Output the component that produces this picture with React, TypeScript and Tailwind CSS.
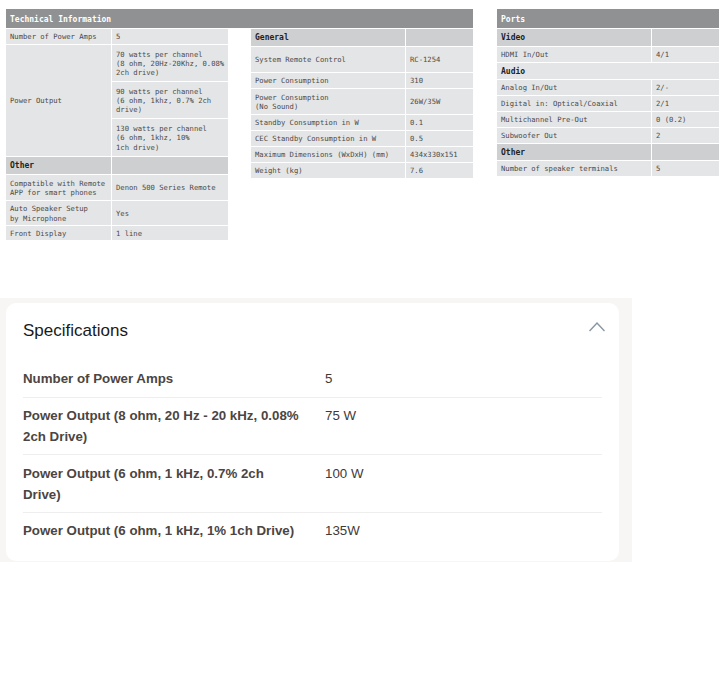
import React from 'react';

type Row = { label: React.ReactNode; value?: React.ReactNode; h: number; kind?: 'head' | 'light' };

const Cell: React.FC<{ className?: string; children?: React.ReactNode }> = ({ className = '', children }) => (
  <div className={`flex items-center pt-px ${className}`}>{children}</div>
);

const SpecTable: React.FC<{ rows: Row[]; labelW: string; valueW: string }> = ({ rows, labelW, valueW }) => (
  <div className="flex flex-col gap-px">
    {rows.map((r, i) => {
      const bg = r.kind === 'head' ? 'bg-[#cdcfd1]' : 'bg-[#e4e5e6]';
      if (r.kind === 'light') {
        return (
          <div key={i} style={{ height: r.h }} className="flex items-center pt-px bg-[#e4e5e6] pl-1 font-bold text-[#222] text-[8px]">
            {r.label}
          </div>
        );
      }
      return (
        <div key={i} style={{ height: r.h }} className="flex gap-px">
          <Cell className={`${labelW} ${bg} pl-1 ${r.kind === 'head' ? 'font-bold text-[#222] text-[8px]' : ''}`}>{r.label}</Cell>
          <Cell className={`${valueW} ${bg} pl-1`}>{r.value}</Cell>
        </div>
      );
    })}
  </div>
);

const general: Row[] = [
  { label: 'General', h: 17, kind: 'head' },
  { label: 'System Remote Control', value: 'RC-1254', h: 25 },
  { label: 'Power Consumption', value: '310', h: 15 },
  { label: <>Power Consumption<br />(No Sound)</>, value: '26W/35W', h: 25 },
  { label: 'Standby Consumption in W', value: '0.1', h: 15 },
  { label: 'CEC Standby Consumption in W', value: '0.5', h: 15 },
  { label: 'Maximum Dimensions (WxDxH) (mm)', value: '434x330x151', h: 15 },
  { label: 'Weight (kg)', value: '7.6', h: 15 },
];

const ports: Row[] = [
  { label: 'Video', h: 17, kind: 'head' },
  { label: 'HDMI In/Out', value: '4/1', h: 15 },
  { label: 'Audio', h: 16, kind: 'light' },
  { label: 'Analog In/Out', value: '2/-', h: 15 },
  { label: 'Digital in: Optical/Coaxial', value: '2/1', h: 15 },
  { label: 'Multichannel Pre-Out', value: '0 (0.2)', h: 15 },
  { label: 'Subwoofer Out', value: '2', h: 15 },
  { label: 'Other', h: 16, kind: 'head' },
  { label: 'Number of speaker terminals', value: '5', h: 15 },
];

const other: Row[] = [
  { label: 'Other', h: 17, kind: 'head' },
  { label: <>Compatible with Remote<br />APP for smart phones</>, value: 'Denon 500 Series Remote', h: 25 },
  { label: <>Auto Speaker Setup<br />by Microphone</>, value: 'Yes', h: 24 },
  { label: 'Front Display', value: '1 line', h: 14 },
];

const specs = [
  { label: 'Number of Power Amps', value: '5', cls: 'pt-[7px] pb-[8px]' },
  { label: 'Power Output (8 ohm, 20 Hz - 20 kHz, 0.08% 2ch Drive)', value: '75 W', cls: 'py-[7px]' },
  { label: 'Power Output (6 ohm, 1 kHz, 0.7% 2ch Drive)', value: '100 W', cls: 'pt-[8px] pb-[7px]' },
  { label: 'Power Output (6 ohm, 1 kHz, 1% 1ch Drive)', value: '135W', cls: 'py-[7px]' },
];

export default function App() {
  return (
    <div className="w-[725px] h-[689px] bg-white overflow-hidden">
      <div className="flex gap-6 pt-[9px] pl-[6px] text-[7.2px] leading-[9.3px] text-[#4a4a4a] font-['DejaVu_Sans_Mono',monospace]">
        <div className="w-[467px]">
          <div className="h-[19px] bg-[#8f9192] flex items-center pt-[2px] pl-[4px] text-white font-bold text-[8px]">Technical Information</div>
          <div className="flex gap-[23px] pt-px">
            <div className="flex flex-col gap-px w-[222px]">
              <div className="flex gap-px h-[15px]">
                <Cell className="w-[105px] bg-[#e4e5e6] pl-1">Number of Power Amps</Cell>
                <Cell className="w-[116px] bg-[#e4e5e6] pl-1">5</Cell>
              </div>
              <div className="flex gap-px h-[111px]">
                <Cell className="w-[105px] bg-[#e4e5e6] pl-1">Power Output</Cell>
                <div className="w-[116px] flex flex-col gap-px">
                  <Cell className="h-[36px] bg-[#e4e5e6] pl-1"><span>70 watts per channel<br />(8 ohm, 20Hz-20Khz, 0.08%<br />2ch drive)</span></Cell>
                  <Cell className="h-[36px] bg-[#e4e5e6] pl-1"><span>90 watts per channel<br />(6 ohm, 1khz, 0.7% 2ch<br />drive)</span></Cell>
                  <Cell className="h-[37px] bg-[#e4e5e6] pl-1"><span>130 watts per channel<br />(6 ohm, 1khz, 10%<br />1ch drive)</span></Cell>
                </div>
              </div>
              <SpecTable rows={other} labelW="w-[105px]" valueW="w-[116px]" />
            </div>
            <div className="w-[222px]">
              <SpecTable rows={general} labelW="w-[154px]" valueW="w-[67px]" />
            </div>
          </div>
        </div>
        <div className="w-[222px]">
          <div className="h-[19px] bg-[#8f9192] flex items-center pt-[2px] pl-[4px] text-white font-bold text-[8px]">Ports</div>
          <div className="pt-px">
            <SpecTable rows={ports} labelW="w-[154px]" valueW="w-[67px]" />
          </div>
        </div>
      </div>

      <div className="mt-[58px] w-[632px] h-[264px] bg-[#f7f6f5] pt-[5px] pl-[6px] font-['Liberation_Sans',Arial,sans-serif]">
        <div className="w-[613px] h-[258px] bg-white rounded-[10px] px-[17px]">
          <div className="flex items-start justify-between pt-[17px] h-[58px]">
            <h2 className="text-[17px] leading-[21px] text-[#1a1a1a]">Specifications</h2>
            <svg width="16" height="11" viewBox="0 0 16 11" fill="none" className="mt-[1px] -mr-[3px]">
              <path d="M0.5 10 L8 2 L15.5 10" stroke="#8a97a3" strokeWidth="1.5" />
            </svg>
          </div>
          <div className="w-[579px] flex flex-col">
            {specs.map((s, i) => (
              <div key={i} className={`flex text-[13.3px] leading-[21px] ${s.cls} ${i < specs.length - 1 ? 'border-b border-[#eeeeee]' : ''}`}>
                <div className="w-[302px] pr-[24px] font-bold text-[#4c4542]">{s.label}</div>
                <div className="text-[#3f3a38]">{s.value}</div>
              </div>
            ))}
          </div>
        </div>
      </div>
    </div>
  );
}
